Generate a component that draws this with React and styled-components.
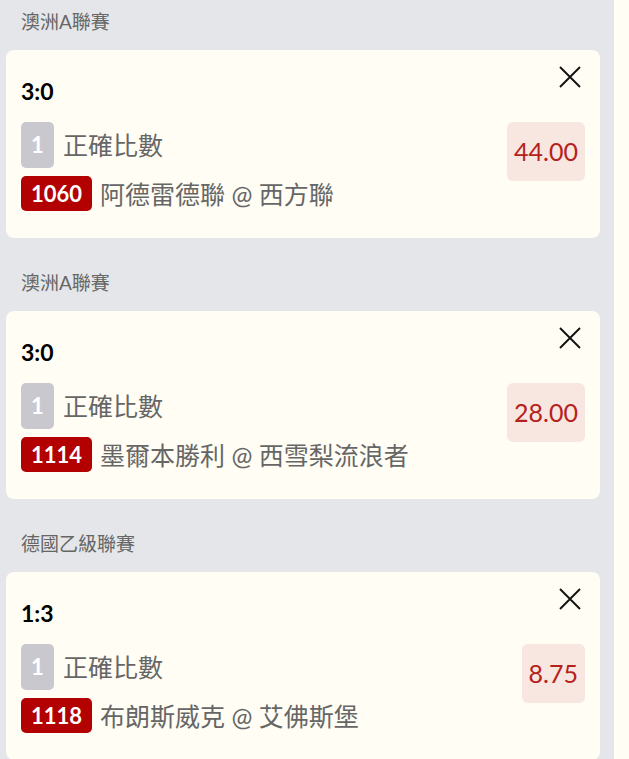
import styled, { createGlobalStyle } from 'styled-components';

const GlobalStyle = createGlobalStyle`
    html, body {
        margin: 0;
        padding: 0;
        background: #fffdf4;
        overflow: hidden;
    }
    body {
        font-family: Lato, "Noto Sans CJK TC", sans-serif;
    }
`;

const bets = [
    { league: '澳洲A聯賽', score: '3:0', leg: '1', market: '正確比數', code: '1060', match: '阿德雷德聯 @ 西方聯', odds: '44.00' },
    { league: '澳洲A聯賽', score: '3:0', leg: '1', market: '正確比數', code: '1114', match: '墨爾本勝利 @ 西雪梨流浪者', odds: '28.00' },
    { league: '德國乙級聯賽', score: '1:3', leg: '1', market: '正確比數', code: '1118', match: '布朗斯威克 @ 艾佛斯堡', odds: '8.75' },
];

function CloseIcon() {
    return (
        <svg width='22' height='22' viewBox='0 0 22 22'>
            <path d='M1 1 L21 21 M21 1 L1 21' stroke='#111' strokeWidth='1.9' fill='none' />
        </svg>
    );
}

function BetCard({ bet }) {
    return (
        <Block>
            <League>{bet.league}</League>
            <Card>
                <TopRow>
                    <Score>{bet.score}</Score>
                    <CloseButton aria-label='remove'>
                        <CloseIcon />
                    </CloseButton>
                </TopRow>
                <BodyRow>
                    <Details>
                        <Line>
                            <LegBadge>{bet.leg}</LegBadge>
                            <Market>{bet.market}</Market>
                        </Line>
                        <Line>
                            <CodeBadge>{bet.code}</CodeBadge>
                            <Match>{bet.match}</Match>
                        </Line>
                    </Details>
                    <Odds>{bet.odds}</Odds>
                </BodyRow>
            </Card>
        </Block>
    );
}

export default function App() {
    return (
        <>
            <GlobalStyle />
            <Panel>
                {bets.map((bet, i) => (
                    <BetCard key={i} bet={bet} />
                ))}
            </Panel>
        </>
    );
}

const Panel = styled.div`
    width: 614px;
    min-height: 100vh;
    box-sizing: border-box;
    background: #e4e6e9;
    padding: 0 14px 0 6px;
    display: flex;
    flex-direction: column;
    gap: 23px;
`;

const Block = styled.div`
    display: flex;
    flex-direction: column;
`;

const League = styled.div`
    height: 50px;
    box-sizing: border-box;
    padding: 8px 0 0 15px;
    font-size: 19px;
    line-height: 28px;
    color: #666;
`;

const Card = styled.div`
    background: #fffdf4;
    border-radius: 8px;
    padding: 12px 15px 27px 15px;
`;

const TopRow = styled.div`
    display: flex;
    justify-content: space-between;
    align-items: flex-start;
`;

const Score = styled.div`
    margin-top: 14px;
    font-size: 23px;
    line-height: 30px;
    font-weight: 700;
    color: #000;
`;

const CloseButton = styled.button`
    width: 30px;
    height: 30px;
    padding: 0;
    border: none;
    background: transparent;
    display: flex;
    align-items: center;
    justify-content: center;
    cursor: pointer;
`;

const BodyRow = styled.div`
    margin-top: 16px;
    display: flex;
    justify-content: space-between;
    align-items: flex-start;
`;

const Details = styled.div`
    display: flex;
    flex-direction: column;
    gap: 8px;
`;

const Line = styled.div`
    display: flex;
    align-items: center;
`;

const LegBadge = styled.div`
    width: 33px;
    height: 46px;
    border-radius: 5px;
    background: #c9c8cf;
    color: #fff;
    font-size: 22px;
    font-weight: 700;
    line-height: 46px;
    text-align: center;
`;

const Market = styled.div`
    margin-left: 9px;
    font-size: 25px;
    line-height: 32px;
    color: #666;
`;

const CodeBadge = styled.div`
    width: 71px;
    height: 35px;
    border-radius: 5px;
    background: #b30000;
    color: #fff;
    font-size: 22px;
    font-weight: 700;
    line-height: 35px;
    text-align: center;
`;

const Match = styled.div`
    margin-left: 8px;
    font-size: 25px;
    line-height: 32px;
    color: #666;
`;

const Odds = styled.div`
    height: 59px;
    padding: 0 7px;
    border-radius: 6px;
    background: #f8e6e0;
    color: #b5221c;
    font-size: 25px;
    line-height: 59px;
`;
